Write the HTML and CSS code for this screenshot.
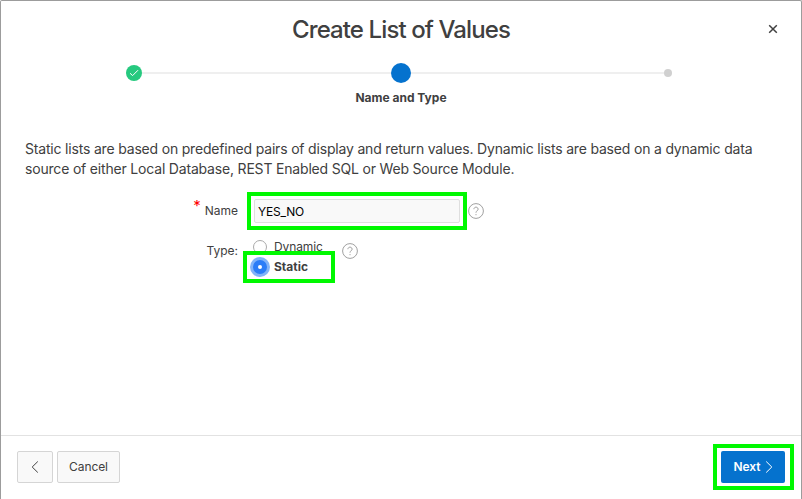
FILE: index.html
```html
<!DOCTYPE html>
<html lang="en">
<head>
<meta charset="utf-8">
<title>Create List of Values</title>
<link rel="stylesheet" href="styles.css">
</head>
<body>
<div class="dialog">
  <header class="header">
    <h1 class="title">Create List of Values</h1>
    <button class="close" aria-label="Close"><svg width="10" height="10" viewBox="0 0 10 10"><path d="M1.2 1.2 8.8 8.8M8.8 1.2 1.2 8.8"/></svg></button>
  </header>
  <div class="wizard">
    <div class="track">
      <span class="step step-done"><svg width="16" height="16" viewBox="0 0 16 16"><path d="M4.1 8.3 6.6 10.6 12 5.2"/></svg></span>
      <span class="line line-done"></span>
      <span class="step step-current"></span>
      <span class="line line-next"></span>
      <span class="step step-next"></span>
    </div>
    <div class="step-label"><span>Name and Type</span></div>
  </div>
  <main class="body">
    <p class="intro"><span>Static lists are based on predefined pairs of display and return values. Dynamic lists are based on a dynamic data</span><br><span>source of either Local Database, REST Enabled SQL or Web Source Module.</span></p>
    <div class="field name-field">
      <label class="label" for="name"><span class="required">*</span><span class="name-label">Name</span></label>
      <div class="mark mark-name"><input id="name" class="input" value="YES_NO"></div>
      <span class="help"><svg width="16" height="16" viewBox="0 0 16 16"><circle cx="8" cy="8" r="7.4"/><path d="M5.9 6.2a2.1 2 0 1 1 3.4 1.5C8.4 8.4 8 8.5 8 9.7M8 11.1v1.1"/></svg></span>
    </div>
    <div class="field type-field">
      <span class="label"><span class="type-label">Type:</span></span>
      <div class="options">
        <div class="option"><span class="radio"></span><span class="dynamic">Dynamic</span></div>
        <div class="option option-on"><span class="radio radio-on"></span><span class="static">Static</span></div>
        <div class="mark mark-static"></div>
      </div>
      <span class="help type-help"><svg width="16" height="16" viewBox="0 0 16 16"><circle cx="8" cy="8" r="7.4"/><path d="M5.9 6.2a2.1 2 0 1 1 3.4 1.5C8.4 8.4 8 8.5 8 9.7M8 11.1v1.1"/></svg></span>
    </div>
  </main>
  <footer class="footer">
    <button class="button back" aria-label="Back"><svg width="8" height="12" viewBox="0 0 8 12"><path d="M6.8 .5 1.2 6l5.6 5.5"/></svg></button>
    <button class="button cancel"><span>Cancel</span></button>
    <div class="mark mark-next"><button class="button next"><span>Next</span><svg width="8" height="12" viewBox="0 0 8 12"><path d="M1.2 .5 6.8 6l-5.6 5.5"/></svg></button></div>
  </footer>
</div>
</body>
</html>
```
FILE: styles.css
```css
* { box-sizing: border-box; }
body {
  margin: 0;
  background: #fff;
  color: #404040;
  font: 12px/16px Inter, "Liberation Sans", sans-serif;
  overflow: hidden;
}
button { font: inherit; color: inherit; cursor: pointer; }
svg { display: block; fill: none; stroke: currentColor; flex: none; }
.dialog {
  display: flex;
  flex-direction: column;
  height: 499px;
  border: 1px solid #9c9c9c;
  border-bottom: 0;
  border-radius: 2px 2px 0 0;
}
.header {
  display: grid;
  grid-template-columns: 48px 1fr 48px;
  align-items: center;
  height: 56px;
}
.title {
  grid-column: 2;
  margin: 2px 0 0;
  text-align: center;
  font-size: 24px;
  line-height: 32px;
  font-weight: 500;
  letter-spacing: -.9px;
}
.close {
  display: flex;
  padding: 0;
  margin-left: 15px;
  border: 0;
  background: none;
}
.close svg { stroke-width: 1.5; }
.wizard { height: 70px; padding: 6px 123px 0; }
.track {
  display: grid;
  grid-template-columns: 20px 1fr 20px 1fr 20px;
  align-items: center;
  justify-items: center;
  height: 20px;
}
.line { justify-self: stretch; height: 2px; background: #efefef; }
.line-done { margin-left: -2px; }
.line-next { margin-right: -6px; }
.step { border-radius: 50%; }
.step-done { width: 16px; height: 16px; background: #26c97f; color: #fff; }
.step-current { width: 20px; height: 20px; background: #0572ce; }
.step-next { width: 8px; height: 8px; background: #d0d0d0; }
.step-label {
  margin-top: 7px;
  text-align: center;
  font-weight: 700;
  line-height: 16px;
}
.body { flex: 1; padding: 12px 24px 0; }
.intro {
  margin: 0;
  font-size: 14px;
  line-height: 20px;
  letter-spacing: -.186px;
  white-space: nowrap;
}
.field { display: flex; }
.name-field { margin-top: 13px; height: 38px; }
.label { width: 213px; display: flex; justify-content: flex-end; line-height: 16px; }
.name-field .label { padding-top: 11px; }
.required { color: #f00; font-size: 15px; margin: -5px 4px 0 0; }
.mark { border: 4px solid #00f800; }
.mark-name { width: 220px; margin-left: 9px; padding: 3px; }
.input {
  display: block;
  width: 206px;
  height: 24px;
  padding: 0 3px;
  border: 1px solid #dfdfdf;
  border-radius: 2px;
  background: #f9f9f9;
  color: #000;
  font: inherit;
  letter-spacing: -.2px;
  outline: 0;
}
.help { color: #a0a0a0; margin: 11px 0 0 1px; }
.type-field { margin-top: 9px; }
.type-field .label { padding-top: 4px; }
.options { position: relative; margin-left: 15px; width: 88px; }
.option { display: flex; align-items: center; height: 16px; gap: 7px; }
.dynamic { letter-spacing: -.1px; }
.option-on { margin-top: 4px; font-weight: 700; }
.radio { width: 14px; height: 14px; border: 1px solid #aaa; border-radius: 50%; background: #fff; }
.radio-on { border: 5px solid #2b7cf7; box-shadow: 0 0 0 3px #82b3f8; }
.mark-static { position: absolute; left: -10px; top: 12px; width: 92px; height: 32px; }
.type-help { margin: 4px 0 0 1px; }
.footer {
  display: flex;
  height: 64px;
  padding: 15px 7px 0 16px;
  border-top: 1px solid #e2e2e2;
}
.button {
  display: flex;
  align-items: center;
  justify-content: center;
  height: 32px;
  padding: 0;
  border: 1px solid #d5d5d5;
  border-radius: 2px;
  background: #f9f9f9;
}
.back { width: 36px; }
.cancel { width: 63px; margin-left: 4px; }
.cancel span { letter-spacing: -.1px; }
.mark-next { margin: -7px 0 0 auto; width: 81px; height: 46px; padding: 3px 4px 0; }
.next { width: 64px; border: 0; background: #0572ce; color: #fff; font-weight: 600; gap: 4px; }
```
